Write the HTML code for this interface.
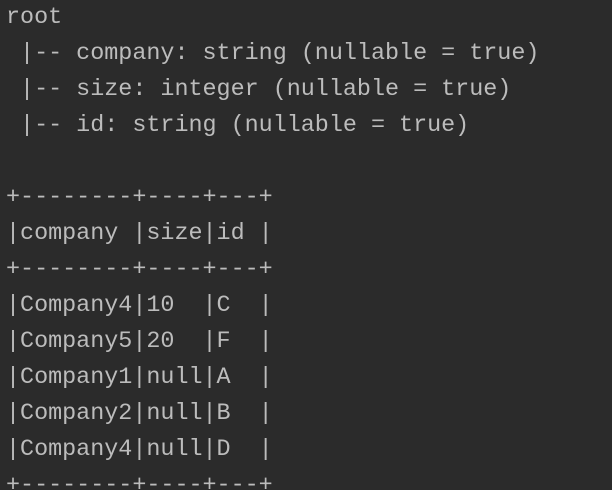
<!DOCTYPE html>
<html><head><style>
html,body{margin:0;padding:0;background:#2b2b2b;width:612px;height:490px;overflow:hidden}
pre{margin:0;padding:0 0 0 6px;font-family:"Liberation Mono",monospace;font-size:23.4px;line-height:36px;color:#bcbcbc;position:relative;top:0px}
</style></head><body><pre>root
 |-- company: string (nullable = true)
 |-- size: integer (nullable = true)
 |-- id: string (nullable = true)

+--------+----+---+
|company |size|id |
+--------+----+---+
|Company4|10  |C  |
|Company5|20  |F  |
|Company1|null|A  |
|Company2|null|B  |
|Company4|null|D  |
+--------+----+---+
</pre></body></html>
